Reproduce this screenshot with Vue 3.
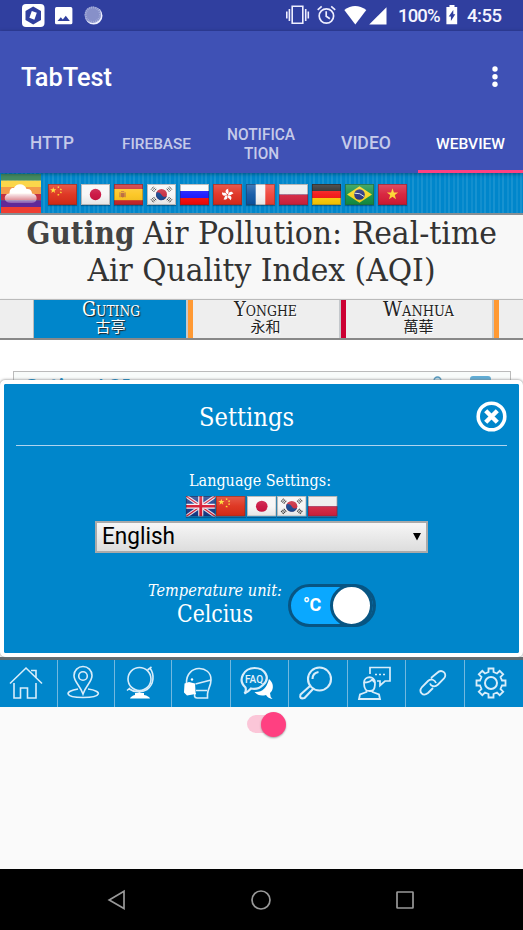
<script setup>
const tabs = [
  { id: 'http', lines: [['HTTP', 44]], size: 18.5 },
  { id: 'firebase', lines: [['FIREBASE', 69]], size: 15.5 },
  { id: 'notification', lines: [['NOTIFICA', 68], ['TION', 35]], size: 16 },
  { id: 'video', lines: [['VIDEO', 50]], size: 18.5 },
  { id: 'webview', lines: [['WEBVIEW', 69]], size: 15.5, active: true },
]
const flags = ['cn', 'jp', 'es', 'kr', 'ru', 'hk', 'fr', 'pl', 'de', 'br', 'vn']
const languages = ['gb', 'cn', 'jp', 'kr', 'pl']
const stations = [
  { name: 'Guting', local: '古亭', width: 58, level: 'moderate', active: true },
  { name: 'Yonghe', local: '永和', width: 63, level: 'unhealthy' },
  { name: 'Wanhua', local: '萬華', width: 71, level: 'moderate' },
]
</script>

<template>
  <div class="screen">
    <svg class="defs" width="0" height="0">
      <defs>
        <linearGradient id="gloss" x2="0" y2="1">
          <stop offset="0" stop-color="#fff" stop-opacity=".22" />
          <stop offset=".5" stop-color="#fff" stop-opacity=".06" />
          <stop offset="1" stop-color="#000" stop-opacity=".07" />
        </linearGradient>
        <linearGradient id="cloudFill" x2="0" y2="1">
          <stop offset=".45" stop-color="#fff" />
          <stop offset="1" stop-color="#fff" stop-opacity=".25" />
        </linearGradient>
        <symbol id="star" viewBox="-10 -10 20 20">
          <path d="M0-10 2.35-3.2 9.5-3.1 3.8 1.2 5.9 8.1 0 4-5.9 8.1-3.8 1.2-9.5-3.1-2.35-3.2z" />
        </symbol>
        <symbol id="cn" viewBox="0 0 29 21">
          <path fill="#dd2c17" d="M0 0h29v21H0z" />
          <g fill="#ffdb28">
            <use href="#star" x="2" y="3" width="6.5" height="6.5" />
            <use href="#star" x="9" y="1.8" width="2.8" height="2.8" />
            <use href="#star" x="11.5" y="4" width="2.8" height="2.8" />
            <use href="#star" x="11.5" y="7" width="2.8" height="2.8" />
            <use href="#star" x="9" y="9.4" width="2.8" height="2.8" />
          </g>
        </symbol>
        <symbol id="jp" viewBox="0 0 29 21">
          <path fill="#f6f6f6" d="M0 0h29v21H0z" />
          <circle cx="14.5" cy="10.5" r="5.7" fill="#c90d3c" />
        </symbol>
        <symbol id="es" viewBox="0 0 29 21">
          <path fill="#c9252b" d="M0 0h29v21H0z" />
          <path fill="#fdc51c" d="M0 5h29v11.2H0z" />
          <path fill="#b8673a" d="M5.5 8.2h1v5h-1zM10.6 8.2h1v5h-1zM7 7.2h3.2v1H7zM7 9h3.3v3.7q-1.6 1.5-3.3 0z" />
        </symbol>
        <symbol id="kr" viewBox="0 0 29 21">
          <path fill="#f6f6f6" d="M0 0h29v21H0z" />
          <circle cx="14.5" cy="10.5" r="5.5" fill="#c92a3d" />
          <path fill="#14458d" d="M9.4 8.6a5.5 5.5 0 1 0 10.4 3.5c-1.3 1.3-3.8 1.1-5.3-1.4-1.3-2.3-4.2-3-5.1-2.1z" />
          <g stroke="#333" stroke-width="1" stroke-dasharray="1.8 .4">
            <path d="m4 5.7 2.7-3.2M5.3 6.8 8 3.6M6.6 7.9l2.7-3.2M22.3 2.5 25 5.7M21 3.6l2.7 3.2M19.7 4.7l2.7 3.2M4 15.3l2.7 3.2M5.3 14.2 8 17.4M6.6 13.1l2.7 3.2M25 15.3l-2.7 3.2M23.7 14.2 21 17.4M22.4 13.1l-2.7 3.2" />
          </g>
        </symbol>
        <symbol id="ru" viewBox="0 0 29 21">
          <path fill="#fafafa" d="M0 0h29v7H0z" />
          <path fill="#1414ff" d="M0 7h29v7H0z" />
          <path fill="#f70808" d="M0 14h29v7H0z" />
        </symbol>
        <symbol id="hk" viewBox="0 0 29 21">
          <path fill="#df2c1c" d="M0 0h29v21H0z" />
          <g fill="#fff">
            <path v-for="n in 5" :key="n" :transform="`rotate(${n * 72} 14.5 10.8)`" d="M14.5 10.3C11.7 8.5 12 5.1 15.5 4.8c-1.4 1.4 1.7 2.7-1 5.5z" />
          </g>
        </symbol>
        <symbol id="fr" viewBox="0 0 29 21">
          <path fill="#f5f5f5" d="M0 0h29v21H0z" />
          <path fill="#0b55a4" d="M0 0h9.7v21H0z" />
          <path fill="#ef4035" d="M19.3 0H29v21h-9.7z" />
        </symbol>
        <symbol id="pl" viewBox="0 0 29 21">
          <path fill="#ededed" d="M0 0h29v10.5H0z" />
          <path fill="#d3213f" d="M0 10.5h29V21H0z" />
        </symbol>
        <symbol id="de" viewBox="0 0 29 21">
          <path fill="#222" d="M0 0h29v7H0z" />
          <path fill="#f31212" d="M0 7h29v7H0z" />
          <path fill="#ffcc05" d="M0 14h29v7H0z" />
        </symbol>
        <symbol id="br" viewBox="0 0 29 21">
          <path fill="#129044" d="M0 0h29v21H0z" />
          <path fill="#f9d51e" d="M14.5 2.3 27 10.5 14.5 18.7 2 10.5z" />
          <circle cx="14.5" cy="10.5" r="5.3" fill="#28337d" />
          <path d="M9.5 9.2q5.7-.6 9.7 3.4" fill="none" stroke="#d9e5e8" stroke-width="1" />
        </symbol>
        <symbol id="vn" viewBox="0 0 29 21">
          <path fill="#d61a35" d="M0 0h29v21H0z" />
          <use href="#star" x="8.5" y="4.3" width="12" height="12" fill="#fdd52b" />
        </symbol>
        <symbol id="gb" viewBox="0 0 29 21">
          <path fill="#15398a" d="M0 0h29v21H0z" />
          <path stroke="#e8e4ee" stroke-width="3.4" d="m0 0 29 21M29 0 0 21" />
          <path stroke="#d5152e" stroke-width="1.1" d="m0 0 29 21M29 0 0 21" />
          <path stroke="#f3f0f5" stroke-width="5" d="M14.5 0v21M0 10.5h29" />
          <path stroke="#d5152e" stroke-width="2.8" d="M14.5 0v21M0 10.5h29" />
        </symbol>
      </defs>
    </svg>

    <header class="status">
      <div class="notices">
        <svg width="23" height="24" viewBox="0 0 23 24">
          <rect width="22.5" height="23" rx="4" fill="#fff" />
          <path fill="#303f9f" d="M11.2 2.6 19 7v9l-7.8 4.5L3.5 16V7z" />
          <path fill="#fff" d="m9.8 7 5 1.8-2.4 7-5-2z" />
        </svg>
        <svg width="18" height="18" viewBox="0 0 18 18">
          <path fill="#fff" fill-rule="evenodd" d="M1.5 0h14.3Q17.4 0 17.4 1.7v14q0 1.6-1.6 1.6H1.5Q0 17.3 0 15.7v-14Q0 0 1.5 0zM2.5 14h12.3l-4-5.2-3 3.6-2-2.2z" />
        </svg>
        <svg width="19" height="19" viewBox="0 0 19 19">
          <circle cx="9.7" cy="9.7" r="8.8" fill="#eef0ff" />
          <circle cx="8.8" cy="8.7" r="8.3" fill="#8790c9" />
          <circle cx="8.8" cy="8.7" r="7.2" fill="none" stroke="#a9b1dc" stroke-width="2" stroke-dasharray=".8 1.2" />
        </svg>
      </div>
      <div class="system">
        <svg class="vibrate" width="23" height="20" viewBox="0 0 23 20">
          <path fill="none" stroke="#eef" stroke-width="1.6" d="M6.2 1.3h10.6v17H6.2zM3.4 4v12M.8 6.5v7M19.7 4v12M22.3 6.5v7" />
        </svg>
        <svg class="alarm" width="19" height="20" viewBox="0 0 19 20">
          <g fill="none" stroke="#eef" stroke-width="1.7">
            <circle cx="9.4" cy="11" r="7.2" />
            <path d="M9.2 6.3v5l3.7 2.4M.7 4.8l4-3.4M18.2 4.8l-4-3.4" />
          </g>
        </svg>
        <svg class="wifi" width="23" height="19" viewBox="0 0 23 19">
          <path fill="#fff" d="M.3 4Q11-4 22.3 4L11.3 18.5z" />
        </svg>
        <svg class="signal" width="18" height="18" viewBox="0 0 18 18"><path fill="#fff" d="M17.5.3v17.2H.2z" /></svg>
        <svg class="percent" width="43" height="20"><text x="0" y="17.3" textLength="42.5">100%</text></svg>
        <svg class="battery" width="12" height="20" viewBox="0 0 12 20">
          <path fill="#fff" d="M3.5 0h5v2h2.7v17.3H.4V2h3.1z" />
          <path fill="#303f9f" d="M7.3 5v4.2h2L4.9 16v-4.5H2.7z" />
        </svg>
        <svg class="clock" width="36" height="20"><text x="0" y="17.3" textLength="35">4:55</text></svg>
      </div>
    </header>

    <div class="appbar">
      <div class="toolbar">
        <svg width="100" height="32"><text class="apptitle" x="0" y="23" textLength="91" lengthAdjust="spacingAndGlyphs">TabTest</text></svg>
        <svg width="6" height="22" viewBox="0 0 6 22" fill="#fff"><circle cx="3" cy="3" r="2.7" /><circle cx="3" cy="10.7" r="2.7" /><circle cx="3" cy="18.3" r="2.7" /></svg>
      </div>
      <nav class="tabs">
        <div v-for="tab in tabs" :key="tab.id" class="tab" :class="{ active: tab.active }">
          <svg v-for="line in tab.lines" :key="line[0]" :width="line[1]" height="19" class="tabtext">
            <text x="0" y="15.5" :font-size="tab.size" :textLength="line[1]" lengthAdjust="spacingAndGlyphs">{{ line[0] }}</text>
          </svg>
        </div>
      </nav>
    </div>

    <main class="web">
      <div class="flagbar">
        <svg class="logo" width="40" height="39" viewBox="0 0 40 39">
          <path fill="#438b62" d="M0 0h40v6.5H0z" /><path fill="#fbd64b" d="M0 6.5h40V13H0z" />
          <path fill="#f39a49" d="M0 13h40v7H0z" /><path fill="#c33242" d="M0 20h40v6.5H0z" />
          <path fill="#602a98" d="M0 26.5h40V33H0z" /><path fill="#ef3e32" d="M0 33h40v6H0z" />
          <path fill="url(#cloudFill)" d="M10 29C5 29 3 25.5 4 22.5c.7-2 2.5-3 4.500-3C8.500 15 10.500 13.500 13 14c2-5.500 11-5 12.500 1 3.500-.5 5.500 1.500 5.500 4.500 6 0 6.500 9.500 0 9.500z" />
        </svg>
        <svg v-for="f in flags" :key="f" class="flag" width="29" height="21" viewBox="0 0 29 21">
          <use :href="'#' + f" width="29" height="21" />
          <rect x=".5" y=".5" width="28" height="20" fill="url(#gloss)" stroke="#333" stroke-opacity=".3" />
        </svg>
      </div>

      <h1 class="headline">
        <svg width="523" height="84">
          <text class="strong" x="26.5" y="29" textLength="108" lengthAdjust="spacingAndGlyphs">Guting</text>
          <text x="143" y="29" textLength="354" lengthAdjust="spacingAndGlyphs">Air Pollution: Real-time</text>
          <text x="87.5" y="65.7" textLength="348" lengthAdjust="spacingAndGlyphs">Air Quality Index (AQI)</text>
        </svg>
      </h1>

      <div class="stations">
        <div class="edge"></div>
        <div v-for="s in stations" :key="s.name" class="station" :class="[s.level, { active: s.active }]">
          <svg :width="s.width" height="17"><text class="name" x="0" y="15.5" :textLength="s.width" lengthAdjust="spacingAndGlyphs">{{ s.name }}</text></svg>
          <span class="local">{{ s.local }}</span>
        </div>
      </div>

      <section class="content">
        <div class="card">
          <svg class="cardtitle" width="110" height="24"><text x="0" y="18" textLength="106" lengthAdjust="spacingAndGlyphs">Guting AQI</text></svg>
          <div class="cardicons">
            <svg width="9" height="12" viewBox="0 0 9 12"><circle cx="4.5" cy="4.5" r="3.4" fill="#b9d9e8" stroke="#5598bd" stroke-width="1.5" /></svg>
            <i class="share"></i>
          </div>
        </div>

        <div class="modal">
          <div class="modalhead">
            <svg class="serif" width="96" height="36"><text x="0" y="26.5" font-size="25.5" textLength="95" lengthAdjust="spacingAndGlyphs">Settings</text></svg>
            <svg class="close" width="31" height="31" viewBox="0 0 31 31" fill="none" stroke="#fff">
              <circle cx="15.5" cy="15.5" r="13.3" stroke-width="3.6" /><path stroke-width="4.4" d="m9.7 9.7 11.6 11.6m0-11.6L9.7 21.3" />
            </svg>
          </div>
          <div class="language">
            <svg class="serif" width="142" height="24"><text x="0" y="17" font-size="16" textLength="142" lengthAdjust="spacingAndGlyphs">Language Settings:</text></svg>
            <div class="langflags">
              <svg v-for="f in languages" :key="f" class="flag" width="29.5" height="20.5" viewBox="0 0 29 21" preserveAspectRatio="none">
                <use :href="'#' + f" width="29" height="21" />
                <rect x=".5" y=".5" width="28" height="20" fill="url(#gloss)" stroke="#333" stroke-opacity=".3" />
              </svg>
            </div>
            <div class="select">
              <svg width="76" height="30"><text x="0" y="21" font-size="23" textLength="73" lengthAdjust="spacingAndGlyphs">English</text></svg>
              <svg width="8" height="8"><path d="M0 0h8L4 7.5z" /></svg>
            </div>
          </div>
          <div class="temperature">
            <div class="unit">
              <svg class="serif" width="136" height="21"><text x="0" y="16" font-size="16.5" font-style="italic" textLength="134" lengthAdjust="spacingAndGlyphs">Temperature unit:</text></svg>
              <svg class="serif" width="77" height="29"><text x="0" y="20.5" font-size="23.5" textLength="76" lengthAdjust="spacingAndGlyphs">Celcius</text></svg>
            </div>
            <div class="toggle"><span>°C</span><i></i></div>
          </div>
        </div>
      </section>

      <nav class="bottomnav">
        <a><svg viewBox="0 0 36 36"><path d="M2 18.500 18 3l16 15.500M6 18v15h6.500V23h7v10H28V18M23 5.500h5v7" /></svg></a>
        <a><svg viewBox="0 0 36 36"><path d="M18 29C15 20 9 17 9 10.500a9 9 0 0 1 18 0C27 17 21 20 18 29zM13 24c-14 2-14 8.500 5 8.500s20-6.500 5-8.500" /><circle cx="18" cy="11" r="4.300" /></svg></a>
        <a><svg viewBox="0 0 36 36"><circle cx="17.500" cy="14" r="11.500" /><path d="M27.500 2.500c5.500 7 4.500 17-2.500 22-5.500 3.500-13 3-18.500-1M25.500 5l4-3M5 25.500l3-2.500M17.500 27v3" /><path class="solid" d="M13 28h9v2q5 1 6 3.500H8q1-2.500 5-3.500z" /></svg></a>
        <a><svg viewBox="0 0 36 36"><path d="M6.500 18C6-1 31.500-.5 31 15c0 6-3 8-3.500 14v4H17c-3 0-3-3-1.500-5M15.500 19 31 15M16 25.500h11" /><path class="solid" d="M4.500 18.500 9 17l6 1.500.7 10.500L7 30.500l-3-3z" /><circle class="solid" cx="12" cy="14.500" r="1.200" /></svg></a>
        <a><svg viewBox="0 0 36 36"><path stroke-width="2.200" d="M6.500 22.500C-2 15 5 3 15.500 3S32 13 24 20q-5 5-12 3.500-3 3.500-6.500 5Q7.500 26 6.500 22.500z" /><path class="solid" d="M30 14c6 5 4 12 1 14q0 4 2.500 6-4.500-.5-6.500-4-7 2-11.500-3 11 1 14.500-13z" /><text class="faq" x="6" y="18" textLength="18" lengthAdjust="spacingAndGlyphs">FAQ</text></svg></a>
        <a><svg viewBox="0 0 36 36"><g stroke-width="2.100"><circle cx="22.500" cy="14" r="11.500" /><path d="m13 21-9.500 8.500q-1.500 5 4 3.500l9-9.500M15.500 14q0-6 6-7" /></g></svg></a>
        <a><svg viewBox="0 0 36 36"><path d="M14 9V2.500h20V16h-5l-5 4.500V16h-3M19 9.500h2m2 0h2m2 0h2" stroke-width="1.700" /><path d="M8 17.500c0-7 11-7 11 0 0 9-3 8.500-5.500 8.500S8 25.500 8 17.500zM8 17.500q6 0 8-3l3 3M10.500 25v2L4 29.500 3 34h21l-1-4.500-6.500-2.500v-2" stroke-width="1.800" /></svg></a>
        <a><svg viewBox="0 0 36 36"><path stroke-width="1.800" d="m17 13 6-5c5-5 11 1 7 5.500l-6 6c-3 3-7 2-8-1M19 23l-5 5c-5 4-10-1-6-6l6-6c3-3 7-1 8 2" /></svg></a>
        <a><svg viewBox="0 0 36 36"><circle cx="18" cy="18" r="6" stroke-width="2" /><path stroke-width="1.800" d="M15.500 7V3.500h5V7l3.500 1.500 2.700-2.700 3.500 3.500L27.500 12l1.500 3.500h3.500v5H29L27.500 24l2.700 2.700-3.500 3.500-2.700-2.700-3.500 1.500v3.500h-5V29L12 27.500l-2.700 2.700-3.500-3.500L8.500 24 7 20.500H3.500v-5H7L8.500 12 5.800 9.300l3.500-3.500L12 8.500z" /></svg></a>
      </nav>
    </main>

    <div class="under"><div class="switch"><i></i></div></div>

    <footer class="sysnav">
      <svg width="18" height="20" viewBox="0 0 18 20"><path d="M16 1.200v17.300L1.200 9.900z" /></svg>
      <svg width="20" height="20" viewBox="0 0 20 20"><circle cx="10" cy="10" r="9" /></svg>
      <svg width="18" height="18" viewBox="0 0 18 18"><rect x="1" y="1" width="16" height="16" rx=".5" /></svg>
    </footer>
  </div>
</template>

<style>
body { margin: 0; }
</style>

<style scoped>
* { box-sizing: border-box; }
.screen { width: 523px; height: 930px; display: flex; flex-direction: column; overflow: hidden; background: #fafafa; font-family: Roboto, sans-serif; }
svg { display: block; flex: none; overflow: visible; }
.defs { position: absolute; }
.status { height: 31px; background: #303f9f; display: flex; justify-content: space-between; padding: 4px 20px 0 22px; flex: none; }
.notices { display: flex; gap: 10px; }
.notices svg:nth-child(2) { margin-top: 3px; }
.notices svg:nth-child(3) { margin: 2px 0 0 1px; }
.system { display: flex; font-size: 18.5px; font-weight: 500; fill: #f5f5ff; padding-top: 1px; }
.alarm { margin: 0 8px 0 8px; }
.wifi { margin-top: 1px; }
.signal { margin: 2px 11px 0 2px; }
.battery { margin: 0 9px 0 5px; }
.appbar { height: 142px; background: #3f51b5; flex: none; color: #fff; position: relative; z-index: 1; box-shadow: 0 1px 4px rgba(0,0,0,.4); }
.toolbar { height: 82px; display: flex; justify-content: space-between; padding: 32px 25px 0 21px; }
.toolbar svg:last-child { margin-top: 3px; }
.apptitle { font-size: 25.5px; font-weight: 500; fill: #fff; }
.tabs { display: grid; grid-template-columns: repeat(5, 1fr); height: 60px; }
.tab { display: flex; flex-direction: column; align-items: center; justify-content: center; fill: #c5cae9; border-bottom: 3px solid transparent; font-weight: 500; padding-top: 2px; }
.tab.active { fill: #fff; border-color: #ff4081; }
.web { width: 523px; background: #fff; flex: none; }
.flagbar { height: 42px; padding: 1px 0 0 1px; display: flex; align-items: flex-start; gap: 4px; background: repeating-linear-gradient(90deg, #0086cb 0 3px, #128fcf 3px 5px, #0086cb 5px 7px, #1892d0 7px 9px); border-bottom: 2px solid #888f94; }
.logo { margin-right: 3px; }
.flagbar .flag { margin-top: 10px; }
.flag { box-shadow: 0 1px 1px rgba(0,30,60,.4); }
.headline { margin: 0; height: 84px; background: #f8f8f8; font: 32.5px "DejaVu Serif Condensed", "DejaVu Serif", serif; fill: #333; }
.headline .strong { font-weight: 700; fill: #444; }
.stations { height: 41px; display: flex; background: #eee; border-top: 1px solid #bbb; border-bottom: 2px solid #888; box-shadow: 0 1px 2px #aaa; }
.edge { width: 34px; border-right: 1px solid #bbb; }
.station { width: 153px; display: flex; flex-direction: column; align-items: center; padding-right: 3px; border-right: 5px solid #ff9933; box-shadow: inset -2px 0 #c4c8cc; font-family: "DejaVu Serif Condensed", "DejaVu Serif", serif; fill: #222; color: #222; text-shadow: 1px 1px 1px #fff; }
.station:nth-child(2) { width: 159px; padding-right: 1px; }
.station.unhealthy { border-color: #cc0033; }
.station.active { background: #0086cb; fill: #fff; color: #fff; text-shadow: 1px 1px 1px #222; }
.name { font-size: 20px; font-variant: small-caps; }
.local { font: 15px/17px "Noto Sans CJK TC", sans-serif; }
.content { height: 317px; padding-top: 31px; background: #fff; position: relative; }
.card { width: 498px; height: 286px; margin-left: 13px; border: 1px solid #bbb; border-bottom: 0; background: #f8fbfa; display: flex; justify-content: space-between; padding: 4px 19px 0 10px; }
.cardtitle { font: bold 20px "DejaVu Serif Condensed", "DejaVu Serif", serif; fill: #0086cb; }
.cardicons { display: flex; gap: 28px; }
.share { width: 21px; height: 17px; background: #60add6; border-radius: 3px; }
.modal { position: absolute; top: 40px; left: 0; width: 523px; height: 277px; border: 4px solid #fff; border-radius: 5px; background: #0086cb; padding: 0 12px; box-shadow: 0 0 3px #777; background-clip: padding-box; }
.serif { font-family: "DejaVu Serif Condensed", "DejaVu Serif", serif; fill: #fff; }
.modalhead { height: 62px; border-bottom: 1px solid #b0d4ef; display: grid; grid-template-columns: 1fr 96px 1fr; padding-top: 15px; align-items: start; }
.modalhead .serif { grid-column: 2; margin-left: -15px; }
.modalhead .close { justify-self: end; margin-top: 2px; margin-right: 0; }
.language { display: flex; flex-direction: column; align-items: center; padding-top: 23px; }
.langflags { display: flex; gap: 1px; margin-top: 3px; }
.language .serif { margin-left: -3px; }
.select { width: 333px; height: 32px; margin-top: 4px; border: 2px solid #aaa; background: linear-gradient(#f6f6f6, #ddd); display: flex; justify-content: space-between; padding: 0 5px; }
.select svg:last-child { margin-top: 10px; }
.temperature { display: flex; justify-content: center; gap: 4px; padding: 27px 0 0 1px; }
.unit { display: flex; flex-direction: column; align-items: center; }
.unit svg:last-child { margin-left: -1px; }
.toggle { width: 88px; height: 43px; margin-top: 4px; border: 3px solid #075583; border-radius: 22px; background: #0aa8ff; display: flex; align-items: center; color: #fff; font-weight: 700; font-size: 18px; padding-left: 12px; }
.toggle span { width: 31px; letter-spacing: -.4px; line-height: 36px; }
.toggle i { width: 43px; height: 43px; border-radius: 50%; background: #fff; border: 3px solid #075583; flex: none; margin-left: 2px; }
.bottomnav { height: 50px; border-top: 3px solid #606b70; background: #0086cb; display: grid; grid-template-columns: 58px 57px 57px 59px 58px 59px 58px 59px 58px; }
.bottomnav a { border-right: 1px solid #72b8df; display: flex; justify-content: center; padding: 5px 6px 0 0; }
.bottomnav a:last-child { border-right: 0; }
.bottomnav svg { width: 36px; height: 36px; fill: none; stroke: #d8edfa; stroke-width: 1.6; }
.bottomnav .solid { fill: #fff; stroke: none; }
.bottomnav .faq { font-size: 11px; font-weight: 500; fill: #e5f3fc; stroke: none; }
.under { flex: 1; background: #fafafa; display: flex; justify-content: center; padding: 7px 0 0 7px; }
.switch { width: 36px; height: 18px; border-radius: 9px; background: #fbc6d8; display: flex; margin: 1px 0 0 0; }
.switch i { width: 25px; height: 25px; border-radius: 50%; background: #ff4081; flex: none; margin: -3px 0 0 14px; box-shadow: 0 1px 2px rgba(0,0,0,.35); }
.sysnav { height: 61px; background: #000; flex: none; display: flex; justify-content: space-between; align-items: center; padding: 0 109px 0 108px; }
.sysnav svg { fill: none; stroke: #999; stroke-width: 1.7; }
</style>
